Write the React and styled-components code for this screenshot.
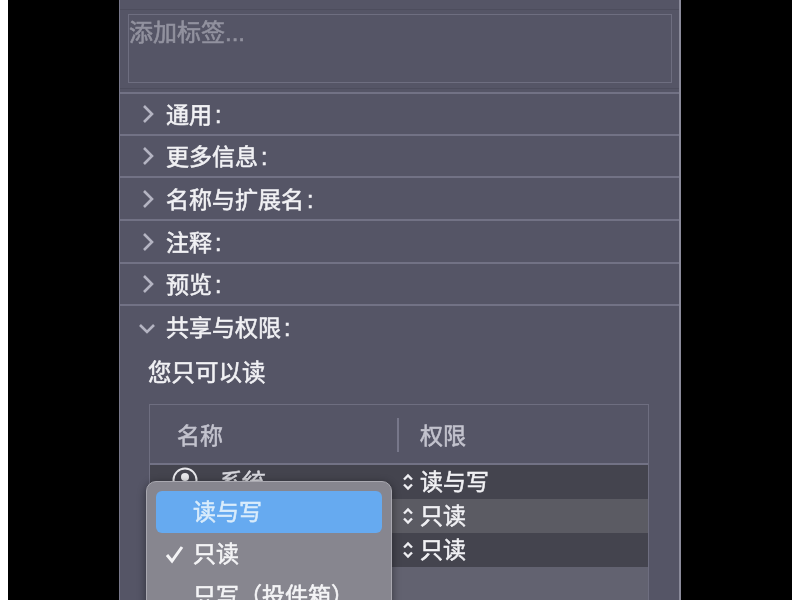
import React from 'react';
import styled, { createGlobalStyle } from 'styled-components';

const Global = createGlobalStyle`
  html, body { margin: 0; padding: 0; background: #fff; }
  body { font-family: "Liberation Sans", "Noto Sans CJK SC", sans-serif; }
`;

const Screen = styled.div`
  width: 784px;
  height: 600px;
  margin: 0 8px;
  background: #000;
  overflow: hidden;
  display: flex;
  padding-left: 111px;
  box-sizing: border-box;
`;

const Panel = styled.div`
  width: 562px;
  height: 600px;
  background: #555566;
  border-left: 1px solid #77778a;
  border-right: 2px solid #8a8a9a;
  box-sizing: border-box;
  position: relative;
  overflow: hidden;
  filter: blur(0.5px);
  -webkit-text-stroke: 0.55px currentColor;
`;

const TagArea = styled.div`
  height: 92px;
  padding: 9px 0 0;
  box-sizing: border-box;
`;

const Rule = styled.div`
  height: 1px;
  background: #4d4d5d;
`;

const TagBox = styled.div`
  height: 69px;
  margin: 4px 7px 5px 8px;
  border: 1px solid #6e6e80;
  box-sizing: border-box;
  color: #92929f;
  font-size: 24px;
  line-height: 36px;
`;

const Section = styled.div`
  height: ${p => p.$h}px;
  border-top: 2px solid #727285;
  box-sizing: border-box;
  display: flex;
  align-items: center;
  padding-left: ${p => p.$pad || 20}px;
  gap: ${p => p.$gap || 10}px;
  color: #f1f1f4;
  font-size: 23px;
`;

const Label = styled.span`
  margin-bottom: ${p => p.$lift ?? 2}px;
`;

const Colon = styled.span`
  margin-left: 3px;
`;

const Arrow = styled.svg`
  width: 16px;
  height: 20px;
  flex: none;
  fill: none;
  stroke: #b4b4c2;
  stroke-width: 2.6;
`;

const ReadOnly = styled.div`
  color: #f1f1f4;
  font-size: 23.5px;
  line-height: 32px;
  padding: 6px 0 0 28px;
`;

const Table = styled.div`
  margin: 15px 30px 0 29px;
  height: 240px;
  border: 1px solid #6e6e80;
  border-bottom: 0;
  box-sizing: border-box;
`;

const Head = styled.div`
  height: 60px;
  display: grid;
  grid-template-columns: 247px 1fr;
  align-items: center;
  border-bottom: 2px solid #727285;
  box-sizing: border-box;
  color: #c3c3ce;
  font-size: 23px;
`;

const HeadCell = styled.div`
  height: 34px;
  margin-top: 2px;
  line-height: 36px;
  padding-left: ${p => p.$pad}px;
  border-left: ${p => (p.$line ? '2px solid #77778a' : '0')};
`;

const Row = styled.div`
  height: 34px;
  display: grid;
  grid-template-columns: 247px 1fr;
  grid-template-rows: 34px;
  align-items: center;
  background: ${p => (p.$light ? '#5b5b63' : '#44444e')};
  color: #f1f1f4;
  font-size: 23px;
`;

const NameCell = styled.div`
  display: flex;
  align-items: center;
  gap: 18px;
  padding-left: 22px;
  margin-bottom: 4px;
  color: #d8d8de;
  font-style: italic;
`;

const PermCell = styled.div`
  display: flex;
  align-items: center;
  gap: 6px;
  padding-left: 5px;
`;

const Stepper = styled.svg`
  width: 12px;
  height: 18px;
  flex: none;
  fill: none;
  stroke: #eeeef2;
  stroke-width: 2.4;
`;

const Filler = styled.div`
  height: 40px;
  background: #626270;
`;

const Menu = styled.div`
  position: absolute;
  left: 26px;
  top: 481px;
  width: 246px;
  height: 150px;
  background: #87868f;
  border: 1px solid #a9a8b0;
  border-radius: 10px;
  box-sizing: border-box;
  padding: 9px;
  box-shadow: 0 2px 8px rgba(0, 0, 0, 0.45);
`;

const MenuItem = styled.div`
  height: 42px;
  border-radius: 6px;
  background: ${p => (p.$active ? '#66aaf0' : 'transparent')};
  color: ${p => (p.$active ? '#d9ecfb' : '#f4f4f6')};
  display: flex;
  align-items: center;
  padding-left: 9px;
  font-size: 23px;
`;

const CheckSlot = styled.span`
  width: 28px;
  flex: none;
  display: flex;
  align-items: center;
`;

const Chevron = ({ open }) => (
  <Arrow viewBox="0 0 16 20">
    <path d={open ? 'M1 6l7 7 7-7' : 'M4 2l8 8-8 8'} />
  </Arrow>
);

const UpDown = () => (
  <Stepper viewBox="0 0 12 18">
    <path d="M2 6.5l4-4 4 4M2 11.5l4 4 4-4" />
  </Stepper>
);

const Perm = ({ text }) => (
  <PermCell>
    <UpDown />
    <Label $lift={5}>{text}</Label>
  </PermCell>
);

const sections = [
  ['通用', 42],
  ['更多信息', 42],
  ['名称与扩展名', 43],
  ['注释', 43],
  ['预览', 42],
];

export default function App() {
  return (
    <>
      <Global />
      <Screen>
        <Panel>
          <TagArea>
            <Rule />
            <TagBox>添加标签...</TagBox>
            <Rule />
          </TagArea>
          {sections.map(([label, h]) => (
            <Section key={label} $h={h}>
              <Chevron />
              <Label>{label}<Colon>:</Colon></Label>
            </Section>
          ))}
          <Section $h={47} $pad={19} $gap={11}>
            <Chevron open />
            <Label $lift={6}>共享与权限<Colon>:</Colon></Label>
          </Section>
          <ReadOnly>您只可以读</ReadOnly>
          <Table>
            <Head>
              <HeadCell $pad={27}>名称</HeadCell>
              <HeadCell $pad={21} $line>权限</HeadCell>
            </Head>
            <Row>
              <NameCell>
                <svg width="26" height="26" viewBox="0 0 26 26">
                  <circle cx="13" cy="13" r="11.5" fill="none" stroke="#e8e8ec" strokeWidth="2" />
                  <circle cx="13" cy="10" r="4" fill="#e8e8ec" />
                  <path d="M5 21c2-5 14-5 16 0" fill="#e8e8ec" />
                </svg>
                系统
              </NameCell>
              <Perm text="读与写" />
            </Row>
            <Row $light>
              <span />
              <Perm text="只读" />
            </Row>
            <Row>
              <span />
              <Perm text="只读" />
            </Row>
            <Filler />
          </Table>
          <Menu>
            <MenuItem $active>
              <CheckSlot />
              <Label $lift={4}>读与写</Label>
            </MenuItem>
            <MenuItem>
              <CheckSlot>
                <svg width="20" height="20" viewBox="0 0 20 20">
                  <path d="M2 11l5 6L17 3" fill="none" stroke="#f4f4f6" strokeWidth="3" />
                </svg>
              </CheckSlot>
              <Label $lift={4}>只读</Label>
            </MenuItem>
            <MenuItem>
              <CheckSlot />
              <Label $lift={4}>{'只写\uFF08投件箱\uFF09'}</Label>
            </MenuItem>
          </Menu>
        </Panel>
      </Screen>
    </>
  );
}
